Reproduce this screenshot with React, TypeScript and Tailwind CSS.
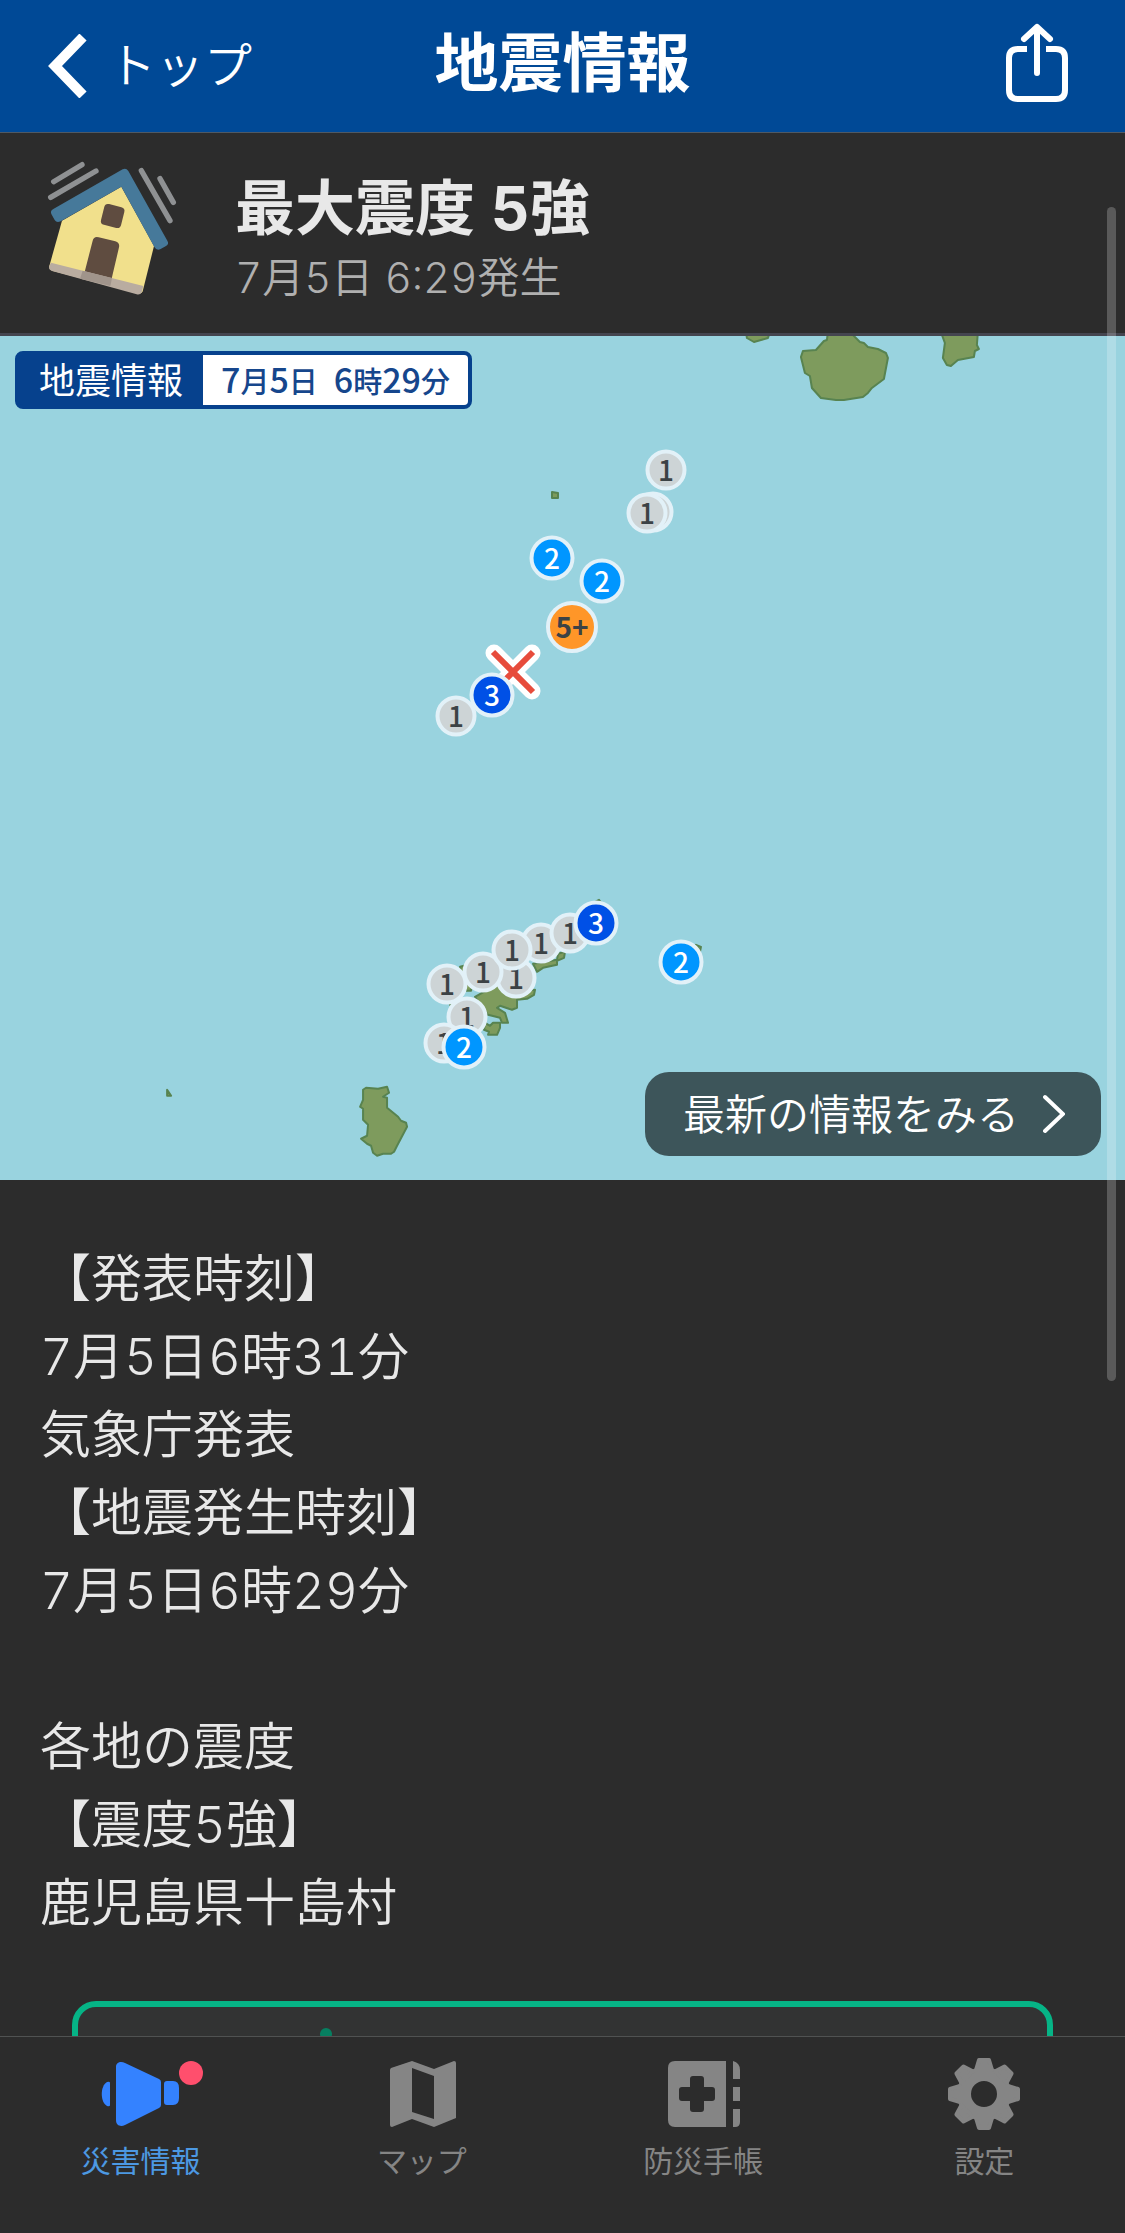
import React from 'react';

type PinLevel = '1' | '2' | '3' | '5+';

interface Pin {
  level: PinLevel;
  x: number;
  y: number;
}

const MAP_WIDTH = 1125;
const MAP_HEIGHT = 844;

const pinStyles: Record<PinLevel, string> = {
  '1': 'size-[41px] bg-[#cdd4d6] text-[#3c4245] font-medium',
  '2': 'size-[45px] bg-[#0096ff] text-white font-medium',
  '3': 'size-[45px] bg-[#0050e6] text-white font-medium',
  '5+': 'size-[52px] bg-[#ff9628] text-[#3c4245] font-bold',
};

// Later pins are drawn over earlier ones
const pins: Pin[] = [
  { level: '1', x: 666, y: 134 },
  { level: '1', x: 653, y: 176 },
  { level: '1', x: 647, y: 177 },
  { level: '1', x: 456, y: 380 },
  { level: '1', x: 541, y: 607 },
  { level: '1', x: 570, y: 597 },
  { level: '1', x: 516, y: 642 },
  { level: '1', x: 447, y: 648 },
  { level: '1', x: 483, y: 636 },
  { level: '1', x: 512, y: 614 },
  { level: '1', x: 467, y: 681 },
  { level: '1', x: 444, y: 707 },
  { level: '2', x: 552, y: 222 },
  { level: '2', x: 602, y: 245 },
  { level: '2', x: 681, y: 626 },
  { level: '2', x: 464, y: 711 },
  { level: '3', x: 492, y: 359 },
  { level: '3', x: 596, y: 587 },
  { level: '5+', x: 572, y: 291 },
];

const reportLines = [
  '【発表時刻】',
  '7月5日6時31分',
  '気象庁発表',
  '【地震発生時刻】',
  '7月5日6時29分',
  '',
  '各地の震度',
  '【震度5強】',
  '鹿児島県十島村',
];

const HouseIcon: React.FC = () => (
  <svg viewBox="0 0 480 480" className="size-40 shrink-0" aria-hidden="true">
    <g stroke="#8f9193" strokeWidth="16" strokeLinecap="round">
      <path d="M71 95 156 44M62 142 198 63M334 62 420 212M390 86 430 157" />
    </g>
    <path d="M96 212 274 110 372 288 338 424Q336 432 326 430L66 362Q56 358 58 348Z" fill="#f1e08c" />
    <rect x="217" y="166" width="62" height="64" rx="12" fill="#5f4c40" transform="rotate(14 248 198)" />
    <path d="M188 272Q192 258 206 262L256 274Q270 278 267 292L241 403 150 382 163 370Z" fill="#5f4c40" />
    <path d="M63 338 340 408 336 424Q332 436 320 433L66 363Q54 358 58 348Z" fill="#b9aca0" />
    <path d="M158 362 246 384 241 408 150 386Z" fill="#a0948b" />
    <path
      d="M64 192Q60 182 70 177L278 58Q288 52 295 63L412 272Q418 282 408 288L392 297Q380 303 373 291L274 110 92 214Q80 220 74 210Z"
      fill="#46799a"
    />
  </svg>
);

const ShareIcon: React.FC = () => (
  <svg viewBox="0 0 64 80" className="h-20 w-16" fill="none" stroke="#fff" strokeWidth="6" aria-hidden="true">
    <path d="M22 26H13Q4 26 4 35V67Q4 76 13 76H51Q60 76 60 67V35Q60 26 51 26H41" />
    <path d="M32 50V5M19 16 32 4 45 16" strokeLinecap="round" strokeLinejoin="round" />
  </svg>
);

const AlertIcon: React.FC = () => (
  <svg viewBox="0 0 80 80" className="size-20" fill="currentColor" aria-hidden="true">
    <path d="M9 29V51Q9 53 6 52C-1 48 -1 32 6 28Q9 27 9 29Z" />
    <path d="M15 13C15 8 20 7 24 9L58 25Q60 26 60 28V51Q60 53 58 54L24 71C20 73 15 72 15 66Z" />
    <path d="M66 27H72Q78 27 78 34V44Q78 51 72 51H66Q63 51 63 48V30Q63 27 66 27Z" />
  </svg>
);

const MapIcon: React.FC = () => (
  <svg viewBox="0 0 80 80" className="size-20" fill="currentColor" aria-hidden="true">
    <path
      fillRule="evenodd"
      d="M8 16Q8 15 9 14L30 7 52 15 72 7Q74 7 74 9V64L52 73 30 65 10 73Q8 73 8 71ZM30 14V58L52 65V22Z"
    />
  </svg>
);

const NotebookIcon: React.FC = () => (
  <svg viewBox="0 0 80 80" className="size-20" fill="currentColor" aria-hidden="true">
    <path
      fillRule="evenodd"
      d="M12 7H63V73H12Q5 73 5 66V14Q5 7 12 7ZM30 22Q27 22 27 25V33H19Q16 33 16 36V44Q16 47 19 47H27V55Q27 58 30 58H38Q41 58 41 55V47H49Q52 47 52 44V36Q52 33 49 33H41V25Q41 22 38 22Z"
    />
    <path d="M70 7Q77 9 77 16V25H70ZM70 33H77V47H70ZM70 55H77V68Q77 73 72 73H70Z" />
  </svg>
);

const GearIcon: React.FC = () => (
  <svg viewBox="0 0 80 80" className="size-20" fill="none" stroke="currentColor" aria-hidden="true">
    <circle cx="40" cy="40" r="20" strokeWidth="14" />
    {[0, 45, 90, 135, 180, 225, 270, 315].map((angle) => (
      <path
        key={angle}
        d="M35 6H45L48 16H32Z"
        fill="currentColor"
        strokeWidth="4"
        strokeLinejoin="round"
        transform={`rotate(${angle} 40 40)`}
      />
    ))}
  </svg>
);

const Header: React.FC = () => (
  <header className="grid grid-cols-[1fr_auto_1fr] items-center h-[133px] shrink-0 border-b border-[#4f5964] bg-[#004996] text-white">
    <a href="#top" className="flex items-center gap-5 pl-12 text-5xl font-[350]">
      <svg viewBox="0 0 40 64" className="h-16 w-10" fill="none" stroke="#fff" strokeWidth="10" aria-hidden="true">
        <path d="M35 3 7 32 35 61" />
      </svg>
      トップ
    </a>
    <h1 className="pb-1.5 text-[64px] leading-20 font-bold">地震情報</h1>
    <button type="button" aria-label="共有" className="justify-self-end mr-14 pb-1.5">
      <ShareIcon />
    </button>
  </header>
);

const Summary: React.FC = () => (
  <section className="flex items-center gap-[45px] h-[203px] pb-1.5 pl-[30px] border-b-3 border-[#44454f]">
    <HouseIcon />
    <div className="pt-4">
      <h2 className="text-[60px] leading-20 font-bold text-[#e8e8e8]">最大震度 5強</h2>
      <p className="text-[42px] leading-[60px] font-[350] text-[#b0b0b0]">7月5日 6:29発生</p>
    </div>
  </section>
);

const QuakeMap: React.FC = () => (
  <section className="relative aspect-[4/3] overflow-hidden bg-[#99d3df] font-['Noto_Sans_CJK_JP',sans-serif]">
    <svg
      viewBox={`0 0 ${MAP_WIDTH} ${MAP_HEIGHT}`}
      className="absolute inset-0 size-full"
      fill="#7e9b5d"
      stroke="#588350"
      strokeWidth="2"
      strokeLinejoin="round"
      aria-hidden="true"
    >
      <path d="M746 -4 747 2 754 6 761 4 768 2 770 -4Z" />
      <path d="M828 -4 827 4 824 5 816 14 803 15 801 21 805 37 810 40 812 52 821 62 836 64 844 64 863 61 868 57 872 52 884 43 888 22 886 17 878 13 868 11 864 7 860 6 853 -1V-4Z" />
      <path d="M941 -4 945 7 943 22 947 29 951 30 958 24 974 21 975 15 979 13 977 9 978 -4Z" />
      <path d="M552 156 558 157 558 162 552 162Z" />
      <path d="M363 754 366 752 378 753 387 751 389 757 383 761 387 762 387 772 398 781 401 785 406 787 407 791 397 810 394 816 391 818 383 818 377 820 373 817 371 810 367 808 361 803 367 800 368 789 363 784 363 773 360 771 363 764Z" />
      <path d="M167 754 171 760 167 760Z" />
      <path d="M475 661 498 648 520 655 535 654 534 659 527 663 517 664 517 672 512 674 500 670 497 672 505 677 508 687 502 687 500 682 488 679 480 669Z" />
      <path d="M485 687 490 690 493 687 500 687 500 692 497 699 488 699 489 696 484 694Z" />
      <path d="M533 628 557 624 558 618 565 616 564 622 557 625 557 629 543 632 537 636Z" />
      <path d="M460 631 464 630 472 650 471 655 466 655Z" />
      <path d="M450 669 453 668 452 672ZM595 566 599 564 601 567ZM696 609 701 611 700 616Z" />
    </svg>

    {/* Epicenter */}
    <svg
      viewBox="0 0 56 56"
      className="absolute size-14 -translate-x-1/2 -translate-y-1/2"
      style={{ left: `${(513 / MAP_WIDTH) * 100}%`, top: `${(336 / MAP_HEIGHT) * 100}%` }}
      role="img"
      aria-label="震源"
    >
      <path d="M9 9 47 47M47 9 9 47" stroke="#fff" strokeWidth="17" strokeLinecap="round" />
      <path d="M8 8 48 48M48 8 8 48" stroke="#e74c3c" strokeWidth="6" />
    </svg>

    {pins.map((pin) => (
      <span
        key={`${pin.x}-${pin.y}`}
        className={`absolute flex items-center justify-center -translate-x-1/2 -translate-y-1/2 rounded-full border-4 border-[#e2f1f8] pb-0.5 text-[28px] leading-none ${pinStyles[pin.level]}`}
        style={{ left: `${(pin.x / MAP_WIDTH) * 100}%`, top: `${(pin.y / MAP_HEIGHT) * 100}%` }}
      >
        {pin.level}
      </span>
    ))}

    <div className="absolute top-[15px] left-[15px] flex h-[58px] items-stretch rounded-lg border-4 border-[#06418d] bg-[#06418d]">
      <span className="flex items-center px-5 pb-1 text-4xl text-white">地震情報</span>
      <span className="flex items-center rounded-r-sm bg-white px-[18px] pb-1 text-[34px] font-medium text-[#16468c]">
        <span>7<small className="text-[29px]">月</small>5<small className="text-[29px]">日</small></span>
        <span className="ml-4">6<small className="text-[29px]">時</small>29<small className="text-[29px]">分</small></span>
      </span>
    </div>

    <button
      type="button"
      className="absolute right-6 bottom-6 flex h-[84px] items-center gap-6 rounded-3xl bg-[#3d555a] pr-9 pl-[38px] text-[42px] text-white"
    >
      <span className="pb-1 font-[350]">最新の情報をみる</span>
      <svg viewBox="0 0 22 40" className="h-10 w-[22px]" fill="none" stroke="#fff" strokeWidth="4" strokeLinecap="round" aria-hidden="true">
        <path d="M2 3 20 20 2 37" />
      </svg>
    </button>
  </section>
);

const Report: React.FC = () => (
  <section className="pt-[60px]">
    <div className="px-10 text-[51px] leading-[78px] font-[350] text-[#e8e8e8]">
      {reportLines.map((line, i) => (
        <p key={i} className="min-h-[78px]">{line}</p>
      ))}
    </div>
    <div className="mx-[72px] mt-[59px] h-60 rounded-3xl border-6 border-[#06b486] bg-[#323333]">
      <div className="ml-[242px] mt-[21px] size-3 rounded-full bg-[#067f60]" />
    </div>
  </section>
);

const tabs = [
  { label: '災害情報', icon: AlertIcon, active: true },
  { label: 'マップ', icon: MapIcon, active: false },
  { label: '防災手帳', icon: NotebookIcon, active: false },
  { label: '設定', icon: GearIcon, active: false },
];

const TabBar: React.FC = () => (
  <nav className="grid grid-cols-4 h-[197px] shrink-0 border-t border-[#505252] bg-[#2c2c2c]">
    {tabs.map(({ label, icon: Icon, active }) => (
      <a
        key={label}
        href={`#${label}`}
        aria-current={active ? 'page' : undefined}
        className={`flex flex-col items-center gap-1 pt-[17px] ${active ? 'text-[#3482ff]' : 'text-[#858585]'}`}
      >
        <span className="relative">
          <Icon />
          {active && <span className="absolute top-[7px] -right-[22px] size-6 rounded-full bg-[#ff4f6d]" />}
        </span>
        <span className={`text-3xl leading-[46px] ${active ? 'text-[#4c99e3]' : ''}`}>{label}</span>
      </a>
    ))}
  </nav>
);

const App: React.FC = () => {
  return (
    <div className="flex h-screen flex-col bg-[#2c2c2c] font-['Inter','Noto_Sans_CJK_JP',sans-serif] tabular-nums" lang="ja">
      <Header />
      <div className="relative min-h-0 flex-1">
        <main className="h-full overflow-y-auto [scrollbar-width:none]">
          <Summary />
          <QuakeMap />
          <Report />
        </main>
        {/* Scroll indicator */}
        <div className="absolute top-[74px] right-[9px] h-[1174px] w-[9px] rounded-full bg-white/22" />
      </div>
      <TabBar />
    </div>
  );
};

export default App;
